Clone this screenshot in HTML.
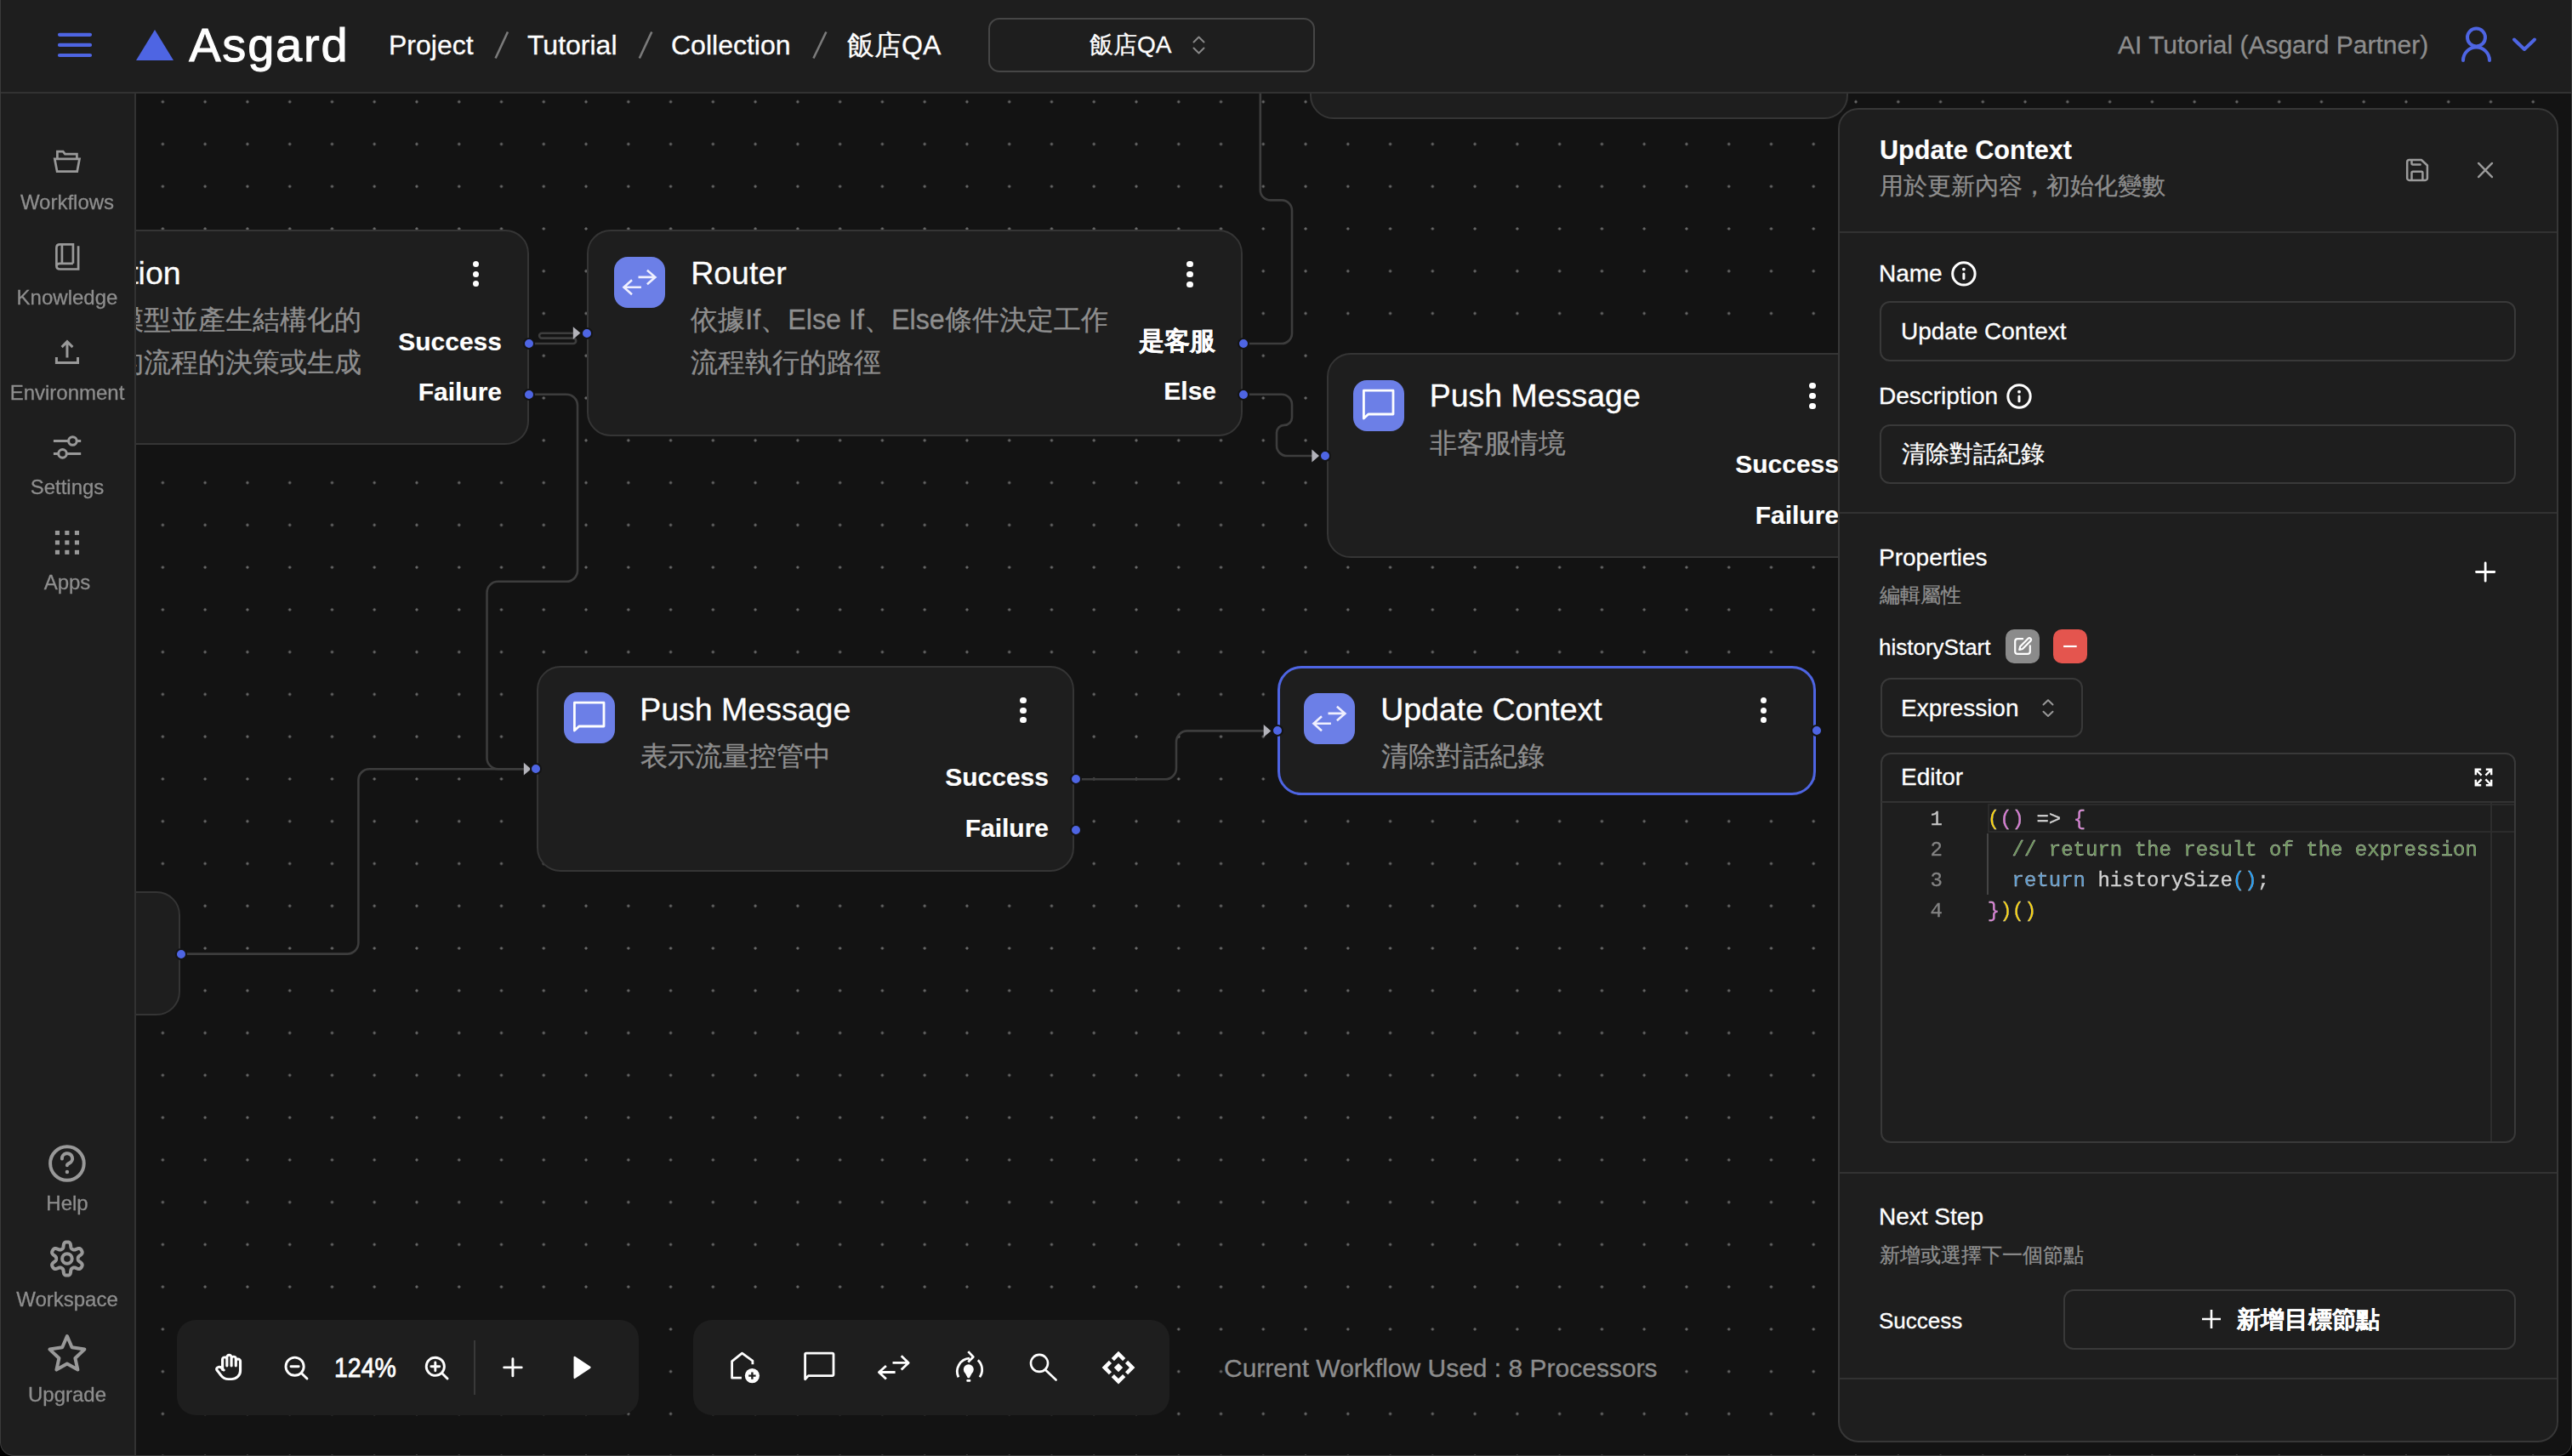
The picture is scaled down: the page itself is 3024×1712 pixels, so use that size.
<!DOCTYPE html><html><head><meta charset="utf-8"><style>
html,body{margin:0;padding:0;background:#000;}
body{width:3024px;height:1712px;overflow:hidden;position:relative;font-family:"Liberation Sans", sans-serif;-webkit-font-smoothing:antialiased;}
.t{position:absolute;white-space:nowrap;}
svg{position:absolute;left:0;top:0;overflow:visible;}
</style></head><body>
<div id="win" style="position:absolute;left:0;top:0;width:3024px;height:1712px;overflow:hidden;will-change:opacity;opacity:0.999;border-radius:0 0 16px 16px;background:#141414;">
<div style="position:absolute;left:0;top:0;width:3024px;height:1712px;background-image:radial-gradient(circle, #6a6a6a 1.3px, transparent 1.9px);background-size:49.77px 49.77px;background-position:17.21px -4.73px;"></div>

<svg width="3024" height="1712" style="z-index:1"><g fill="none" stroke="#3e3e3e" stroke-width="2.6">
<path d="M621.6,404 H674 A3.2,3.2 0 0 0 674,397.6 H637 A2.9,2.9 0 0 1 637,391.8 H676"/>
<path d="M621.6,463.7 H666 A13,13 0 0 1 679,476.7 V670.8 A13,13 0 0 1 666,683.8 H585.5 A13,13 0 0 0 572.5,696.8 V891.2 A13,13 0 0 0 585.5,904.2 H616"/>
<path d="M213,1121.6 H408.4 A13,13 0 0 0 421.4,1108.6 V917.2 A13,13 0 0 1 434.4,904.2 H616"/>
<path d="M1461.5,404 H1507 A12,12 0 0 0 1519,392 V247.4 A12,12 0 0 0 1507,235.4 H1493.8 A12,12 0 0 1 1481.8,223.4 V108"/>
<path d="M1461.5,463.7 H1507 A12,12 0 0 1 1519,475.7 V490.9 A9,9 0 0 1 1510,499.9 A9,9 0 0 0 1501,508.9 V524 A12,12 0 0 0 1513,536 H1545"/>
<path d="M1264.7,916.3 H1370 A13,13 0 0 0 1383,903.3 V872.4 A13,13 0 0 1 1396,859.4 H1488"/>
</g><g fill="#b4b4bb">
<path d="M682.4,391.6 L673.8,384.2 L673.8,399.0 Z"/>
<path d="M624.4,904.2 L615.8,896.8 L615.8,911.6 Z"/>
<path d="M1551.0,536.0 L1542.4,528.6 L1542.4,543.4 Z"/>
<path d="M1494.3,859.4 L1485.7,852.0 L1485.7,866.8 Z"/>
</g></svg>
<div style="position:absolute;left:60.0px;top:270.0px;width:561.5px;height:252.6px;box-sizing:border-box;background:#1f1f1f;border:2px solid #363636;border-radius:28px;z-index:2;"></div>
<div class="t" style="right:2811.4px;top:302.9px;font-size:37.5px;line-height:37.5px;color:#fff;font-weight:normal;-webkit-text-stroke:0.3px #fff;z-index:3;">Extraction</div>
<div class="t" style="right:2599.0px;top:360.0px;font-size:32.3px;line-height:32.3px;color:#8f8f8f;font-weight:normal;-webkit-text-stroke:0.3px #8f8f8f;z-index:3;">模型並產生結構化的</div>
<div class="t" style="right:2599.0px;top:410.0px;font-size:32.3px;line-height:32.3px;color:#8f8f8f;font-weight:normal;-webkit-text-stroke:0.3px #8f8f8f;z-index:3;">的流程的決策或生成</div>
<div style="position:absolute;left:555.7px;top:306.7px;width:7.2px;height:7.2px;border-radius:50%;background:#fff;z-index:3"></div>
<div style="position:absolute;left:555.7px;top:318.5px;width:7.2px;height:7.2px;border-radius:50%;background:#fff;z-index:3"></div>
<div style="position:absolute;left:555.7px;top:330.3px;width:7.2px;height:7.2px;border-radius:50%;background:#fff;z-index:3"></div>
<div class="t" style="right:2434.0px;top:386.8px;font-size:30px;line-height:30px;color:#fff;font-weight:bold;-webkit-text-stroke:0.15px #fff;z-index:3;">Success</div>
<div class="t" style="right:2434.0px;top:445.6px;font-size:30px;line-height:30px;color:#fff;font-weight:bold;-webkit-text-stroke:0.15px #fff;z-index:3;">Failure</div>
<div style="position:absolute;left:614.6px;top:397.0px;width:10px;height:10px;border-radius:50%;background:#4f66e4;border:2px solid #151515;z-index:4"></div>
<div style="position:absolute;left:614.6px;top:456.7px;width:10px;height:10px;border-radius:50%;background:#4f66e4;border:2px solid #151515;z-index:4"></div>
<div style="position:absolute;left:690.3px;top:270.2px;width:770.4px;height:242.6px;box-sizing:border-box;background:#1f1f1f;border:2px solid #363636;border-radius:28px;z-index:2;"></div>
<div style="position:absolute;left:722.0px;top:302.0px;width:60px;height:60px;border-radius:16px;background:#6d80e8;z-index:3"></div>
<svg width="60" height="60" style="left:722.0px;top:302.0px;z-index:3"><g fill="none" stroke="#f0f0ff" stroke-width="2.6"><path d="M750.5,325.9 H770.4 M760.9,317.7 L770.4,325.9 L760.9,334.2 M753.9,337.8 H733.5 M743,329.3 L733.5,337.8 L743,346.3" transform="translate(-722,-302)"/></g></svg>
<div class="t" style="left:812.2px;top:302.9px;font-size:37.5px;line-height:37.5px;color:#fff;font-weight:normal;-webkit-text-stroke:0.3px #fff;z-index:3;">Router</div>
<div class="t" style="left:812.3px;top:360.0px;font-size:32.3px;line-height:32.3px;color:#8f8f8f;font-weight:normal;-webkit-text-stroke:0.3px #8f8f8f;z-index:3;">依據If、Else If、Else條件決定工作</div>
<div class="t" style="left:812.3px;top:410.0px;font-size:32.3px;line-height:32.3px;color:#8f8f8f;font-weight:normal;-webkit-text-stroke:0.3px #8f8f8f;z-index:3;">流程執行的路徑</div>
<div style="position:absolute;left:1395.4px;top:307.0px;width:7.2px;height:7.2px;border-radius:50%;background:#fff;z-index:3"></div>
<div style="position:absolute;left:1395.4px;top:318.8px;width:7.2px;height:7.2px;border-radius:50%;background:#fff;z-index:3"></div>
<div style="position:absolute;left:1395.4px;top:330.6px;width:7.2px;height:7.2px;border-radius:50%;background:#fff;z-index:3"></div>
<div class="t" style="right:1595.0px;top:385.6px;font-size:30px;line-height:30px;color:#fff;font-weight:bold;-webkit-text-stroke:0.15px #fff;z-index:3;">是客服</div>
<div class="t" style="right:1594.0px;top:445.4px;font-size:30px;line-height:30px;color:#fff;font-weight:bold;-webkit-text-stroke:0.15px #fff;z-index:3;">Else</div>
<div style="position:absolute;left:683.0px;top:384.6px;width:10px;height:10px;border-radius:50%;background:#4f66e4;border:2px solid #151515;z-index:4"></div>
<div style="position:absolute;left:1454.5px;top:397.0px;width:10px;height:10px;border-radius:50%;background:#4f66e4;border:2px solid #151515;z-index:4"></div>
<div style="position:absolute;left:1454.5px;top:456.7px;width:10px;height:10px;border-radius:50%;background:#4f66e4;border:2px solid #151515;z-index:4"></div>
<div style="position:absolute;left:1539.6px;top:0.0px;width:633.4px;height:140.2px;box-sizing:border-box;background:#1f1f1f;border:2px solid #363636;border-radius:28px;z-index:2;"></div>
<div style="position:absolute;left:1559.5px;top:414.8px;width:632.5px;height:241.0px;box-sizing:border-box;background:#1f1f1f;border:2px solid #363636;border-radius:28px;z-index:2;"></div>
<div style="position:absolute;left:1590.8px;top:446.6px;width:60px;height:60px;border-radius:16px;background:#6d80e8;z-index:3"></div>
<svg width="60" height="60" style="left:1590.8px;top:446.6px;z-index:3"><g fill="none" stroke="#fff" stroke-width="2.8" stroke-linejoin="round"><path d="M1603.4,458.7 H1638 V486.5 H1608.8 L1603.4,491.6 Z" transform="translate(-1591,-446.5)"/></g></svg>
<div class="t" style="left:1680.7px;top:447.4px;font-size:37.5px;line-height:37.5px;color:#fff;font-weight:normal;-webkit-text-stroke:0.3px #fff;z-index:3;">Push Message</div>
<div class="t" style="left:1681.3px;top:504.5px;font-size:32.3px;line-height:32.3px;color:#8f8f8f;font-weight:normal;-webkit-text-stroke:0.3px #8f8f8f;z-index:3;">非客服情境</div>
<div style="position:absolute;left:2127.4px;top:450.2px;width:7.2px;height:7.2px;border-radius:50%;background:#fff;z-index:3"></div>
<div style="position:absolute;left:2127.4px;top:462.0px;width:7.2px;height:7.2px;border-radius:50%;background:#fff;z-index:3"></div>
<div style="position:absolute;left:2127.4px;top:473.8px;width:7.2px;height:7.2px;border-radius:50%;background:#fff;z-index:3"></div>
<div class="t" style="right:862.0px;top:530.6px;font-size:30px;line-height:30px;color:#fff;font-weight:bold;-webkit-text-stroke:0.15px #fff;z-index:3;">Success</div>
<div class="t" style="right:862.0px;top:591.3px;font-size:30px;line-height:30px;color:#fff;font-weight:bold;-webkit-text-stroke:0.15px #fff;z-index:3;">Failure</div>
<div style="position:absolute;left:1551.4px;top:529.0px;width:10px;height:10px;border-radius:50%;background:#4f66e4;border:2px solid #151515;z-index:4"></div>
<div style="position:absolute;left:630.7px;top:783.0px;width:632.6px;height:241.5px;box-sizing:border-box;background:#1f1f1f;border:2px solid #363636;border-radius:28px;z-index:2;"></div>
<div style="position:absolute;left:662.6px;top:814.4px;width:60px;height:60px;border-radius:16px;background:#6d80e8;z-index:3"></div>
<svg width="60" height="60" style="left:662.6px;top:814.4px;z-index:3"><g fill="none" stroke="#fff" stroke-width="2.8" stroke-linejoin="round"><path d="M1603.4,458.7 H1638 V486.5 H1608.8 L1603.4,491.6 Z" transform="translate(-1591,-446.5)"/></g></svg>
<div class="t" style="left:752.2px;top:815.9px;font-size:37.5px;line-height:37.5px;color:#fff;font-weight:normal;-webkit-text-stroke:0.3px #fff;z-index:3;">Push Message</div>
<div class="t" style="left:752.8px;top:873.0px;font-size:32.3px;line-height:32.3px;color:#8f8f8f;font-weight:normal;-webkit-text-stroke:0.3px #8f8f8f;z-index:3;">表示流量控管中</div>
<div style="position:absolute;left:1199.4px;top:819.7px;width:7.2px;height:7.2px;border-radius:50%;background:#fff;z-index:3"></div>
<div style="position:absolute;left:1199.4px;top:831.5px;width:7.2px;height:7.2px;border-radius:50%;background:#fff;z-index:3"></div>
<div style="position:absolute;left:1199.4px;top:843.3px;width:7.2px;height:7.2px;border-radius:50%;background:#fff;z-index:3"></div>
<div class="t" style="right:1791.0px;top:898.6px;font-size:30px;line-height:30px;color:#fff;font-weight:bold;-webkit-text-stroke:0.15px #fff;z-index:3;">Success</div>
<div class="t" style="right:1791.0px;top:958.9px;font-size:30px;line-height:30px;color:#fff;font-weight:bold;-webkit-text-stroke:0.15px #fff;z-index:3;">Failure</div>
<div style="position:absolute;left:622.8px;top:897.2px;width:10px;height:10px;border-radius:50%;background:#4f66e4;border:2px solid #151515;z-index:4"></div>
<div style="position:absolute;left:1257.7px;top:909.3px;width:10px;height:10px;border-radius:50%;background:#4f66e4;border:2px solid #151515;z-index:4"></div>
<div style="position:absolute;left:1257.7px;top:969.2px;width:10px;height:10px;border-radius:50%;background:#4f66e4;border:2px solid #151515;z-index:4"></div>
<div style="position:absolute;left:1502.2px;top:783.2px;width:633.1px;height:152.1px;box-sizing:border-box;background:#1f1f1f;border:3px solid #4f66e4;border-radius:28px;z-index:2;"></div>
<div style="position:absolute;left:1533.3px;top:814.6px;width:60px;height:60px;border-radius:16px;background:#6d80e8;z-index:3"></div>
<svg width="60" height="60" style="left:1533.3px;top:814.6px;z-index:3"><g fill="none" stroke="#f0f0ff" stroke-width="2.6"><path d="M750.5,325.9 H770.4 M760.9,317.7 L770.4,325.9 L760.9,334.2 M753.9,337.8 H733.5 M743,329.3 L733.5,337.8 L743,346.3" transform="translate(-722,-302)"/></g></svg>
<div class="t" style="left:1623.2px;top:815.9px;font-size:37.5px;line-height:37.5px;color:#fff;font-weight:normal;-webkit-text-stroke:0.3px #fff;z-index:3;">Update Context</div>
<div class="t" style="left:1623.8px;top:872.5px;font-size:32.3px;line-height:32.3px;color:#8f8f8f;font-weight:normal;-webkit-text-stroke:0.3px #8f8f8f;z-index:3;">清除對話紀錄</div>
<div style="position:absolute;left:2069.8px;top:819.7px;width:7.2px;height:7.2px;border-radius:50%;background:#fff;z-index:3"></div>
<div style="position:absolute;left:2069.8px;top:831.5px;width:7.2px;height:7.2px;border-radius:50%;background:#fff;z-index:3"></div>
<div style="position:absolute;left:2069.8px;top:843.3px;width:7.2px;height:7.2px;border-radius:50%;background:#fff;z-index:3"></div>
<div style="position:absolute;left:1494.5px;top:852.4px;width:10px;height:10px;border-radius:50%;background:#4f66e4;border:2px solid #151515;z-index:4"></div>
<div style="position:absolute;left:2129.0px;top:852.4px;width:10px;height:10px;border-radius:50%;background:#4f66e4;border:2px solid #151515;z-index:4"></div>
<div style="position:absolute;left:60.0px;top:1047.8px;width:151.7px;height:146.6px;box-sizing:border-box;background:#1f1f1f;border:2px solid #363636;border-radius:28px;z-index:2;"></div>
<div style="position:absolute;left:206.0px;top:1114.6px;width:10px;height:10px;border-radius:50%;background:#4f66e4;border:2px solid #151515;z-index:4"></div>
<div style="position:absolute;left:0.0px;top:0.0px;width:3024.0px;height:110.0px;box-sizing:border-box;background:#1f1f1f;border-bottom:2px solid #333;z-index:10;"></div>
<svg width="3024" height="110" style="z-index:11"><g stroke="#4f66e4" stroke-width="4.2" stroke-linecap="round"><path d="M70,40.8 H106 M70,52.9 H106 M70,65 H106"/></g><path d="M160,71 L182,35 L204,71 Z" fill="#4f66e4"/></svg>
<div style="position:absolute;z-index:11;left:0;top:0">
</div>
<div class="t" style="left:222.2px;top:25.2px;font-size:56px;line-height:56px;color:#fff;font-weight:normal;z-index:11;letter-spacing:1.8px;-webkit-text-stroke:1.0px #fff;">Asgard</div>
<div class="t" style="left:457.0px;top:37.1px;font-size:32px;line-height:32px;color:#fff;font-weight:normal;-webkit-text-stroke:0.3px #fff;z-index:11;">Project</div>
<div class="t" style="left:620.0px;top:37.1px;font-size:32px;line-height:32px;color:#fff;font-weight:normal;-webkit-text-stroke:0.3px #fff;z-index:11;">Tutorial</div>
<div class="t" style="left:789.0px;top:37.1px;font-size:32px;line-height:32px;color:#fff;font-weight:normal;-webkit-text-stroke:0.3px #fff;z-index:11;">Collection</div>
<div class="t" style="left:996.0px;top:37.1px;font-size:32px;line-height:32px;color:#fff;font-weight:normal;-webkit-text-stroke:0.3px #fff;z-index:11;">飯店QA</div>
<svg width="1100" height="110" style="z-index:11"><g stroke="#7c7c7c" stroke-width="2.6"><path d="M597,37.5 L582.6,68.5 M766.3,37.5 L751.8,68.5 M971.4,37.5 L956.4,68.5"/></g></svg>
<div style="position:absolute;left:1162.4px;top:20.8px;width:383.6px;height:64.4px;box-sizing:border-box;border:2px solid #474747;border-radius:13px;z-index:11;"></div>
<div class="t" style="left:1281.0px;top:38.9px;font-size:28px;line-height:28px;color:#fff;font-weight:normal;-webkit-text-stroke:0.3px #fff;z-index:11;">飯店QA</div>
<svg width="30" height="30" style="left:1395px;top:38px;z-index:11"><g fill="none" stroke="#888" stroke-width="2" stroke-linecap="round" stroke-linejoin="round"><path d="M8.5,11.5 L14.5,5.5 L20.5,11.5 M8.5,18.5 L14.5,24.5 L20.5,18.5"/></g></svg>
<div class="t" style="left:2490.0px;top:37.9px;font-size:30px;line-height:30px;color:#8e8e8e;font-weight:normal;-webkit-text-stroke:0.3px #8e8e8e;z-index:11;">AI Tutorial (Asgard Partner)</div>
<svg width="140" height="60" style="left:2880px;top:25px;z-index:11"><g fill="none" stroke="#4f66e4" stroke-width="4" stroke-linecap="round" stroke-linejoin="round"><circle cx="31.5" cy="19" r="10.5"/><path d="M16,46 A15.5,15.5 0 0 1 47,46"/><path d="M76,21.5 L88,33 L100,21.5"/></g></svg>
<div style="position:absolute;left:0.0px;top:110.0px;width:160.0px;height:1602.0px;box-sizing:border-box;background:#1f1f1f;border-right:2px solid #333;z-index:10;"></div>
<div class="t" style="left:-321.0px;width:800px;text-align:center;top:225.8px;font-size:24px;line-height:24px;color:#8f8f8f;font-weight:normal;-webkit-text-stroke:0.3px #8f8f8f;z-index:11;">Workflows</div>
<div class="t" style="left:-321.0px;width:800px;text-align:center;top:337.7px;font-size:24px;line-height:24px;color:#8f8f8f;font-weight:normal;-webkit-text-stroke:0.3px #8f8f8f;z-index:11;">Knowledge</div>
<div class="t" style="left:-321.0px;width:800px;text-align:center;top:449.7px;font-size:24px;line-height:24px;color:#8f8f8f;font-weight:normal;-webkit-text-stroke:0.3px #8f8f8f;z-index:11;">Environment</div>
<div class="t" style="left:-321.0px;width:800px;text-align:center;top:561.3px;font-size:24px;line-height:24px;color:#8f8f8f;font-weight:normal;-webkit-text-stroke:0.3px #8f8f8f;z-index:11;">Settings</div>
<div class="t" style="left:-321.0px;width:800px;text-align:center;top:673.2px;font-size:24px;line-height:24px;color:#8f8f8f;font-weight:normal;-webkit-text-stroke:0.3px #8f8f8f;z-index:11;">Apps</div>
<div class="t" style="left:-321.0px;width:800px;text-align:center;top:1403.4px;font-size:24px;line-height:24px;color:#8f8f8f;font-weight:normal;-webkit-text-stroke:0.3px #8f8f8f;z-index:11;">Help</div>
<div class="t" style="left:-321.0px;width:800px;text-align:center;top:1516.0px;font-size:24px;line-height:24px;color:#8f8f8f;font-weight:normal;-webkit-text-stroke:0.3px #8f8f8f;z-index:11;">Workspace</div>
<div class="t" style="left:-321.0px;width:800px;text-align:center;top:1627.7px;font-size:24px;line-height:24px;color:#8f8f8f;font-weight:normal;-webkit-text-stroke:0.3px #8f8f8f;z-index:11;">Upgrade</div>
<div style="position:absolute;left:208.0px;top:1552.0px;width:543.0px;height:111.5px;box-sizing:border-box;background:#1f1f1f;border-radius:22px;z-index:5;"></div>
<div style="position:absolute;left:815.0px;top:1551.6px;width:560.0px;height:112.4px;box-sizing:border-box;background:#1f1f1f;border-radius:22px;z-index:5;"></div>
<div class="t" style="left:392.5px;top:1591.9px;font-size:32px;line-height:32px;color:#fff;font-weight:normal;z-index:6;transform:scaleX(0.89);transform-origin:0 0;-webkit-text-stroke:0.8px #fff;">124%</div>
<div style="position:absolute;left:557.0px;top:1576.0px;width:2.0px;height:64.0px;box-sizing:border-box;background:#3a3a3a;z-index:6;"></div>
<div class="t" style="left:1439.0px;top:1594.1px;font-size:30px;line-height:30px;color:#8e8e8e;font-weight:normal;-webkit-text-stroke:0.3px #8e8e8e;z-index:6;">Current Workflow Used : 8 Processors</div>
<div style="position:absolute;left:2161.0px;top:126.5px;width:847.0px;height:1569.5px;box-sizing:border-box;background:#1f1f1f;border:2px solid #383838;border-radius:24px;z-index:20;"></div>
<div class="t" style="left:2210.0px;top:161.1px;font-size:30.6px;line-height:30.6px;color:#fff;font-weight:bold;-webkit-text-stroke:0.15px #fff;z-index:21;">Update Context</div>
<div class="t" style="left:2210.0px;top:205.3px;font-size:28px;line-height:28px;color:#8f8f8f;font-weight:normal;-webkit-text-stroke:0.3px #8f8f8f;z-index:21;">用於更新內容，初始化變數</div>
<div style="position:absolute;left:2163.0px;top:272.0px;width:843.0px;height:2.0px;box-sizing:border-box;background:#333;z-index:21;"></div>
<div style="position:absolute;left:2163.0px;top:602.0px;width:843.0px;height:2.0px;box-sizing:border-box;background:#333;z-index:21;"></div>
<div style="position:absolute;left:2163.0px;top:1378.0px;width:843.0px;height:2.0px;box-sizing:border-box;background:#333;z-index:21;"></div>
<div style="position:absolute;left:2163.0px;top:1620.0px;width:843.0px;height:2.0px;box-sizing:border-box;background:#333;z-index:21;"></div>
<div class="t" style="left:2209.0px;top:308.0px;font-size:28px;line-height:28px;color:#fff;font-weight:normal;-webkit-text-stroke:0.3px #fff;z-index:21;">Name</div>
<div class="t" style="left:2209.0px;top:452.3px;font-size:28px;line-height:28px;color:#fff;font-weight:normal;-webkit-text-stroke:0.3px #fff;z-index:21;">Description</div>
<div style="position:absolute;left:2210.0px;top:354.0px;width:748.0px;height:71.2px;box-sizing:border-box;border:2px solid #3a3a3a;border-radius:12px;z-index:21;"></div>
<div style="position:absolute;left:2210.0px;top:498.8px;width:748.0px;height:70.7px;box-sizing:border-box;border:2px solid #3a3a3a;border-radius:12px;z-index:21;"></div>
<div class="t" style="left:2235.0px;top:376.0px;font-size:28px;line-height:28px;color:#fff;font-weight:normal;-webkit-text-stroke:0.3px #fff;z-index:21;">Update Context</div>
<div class="t" style="left:2236.0px;top:519.8px;font-size:28px;line-height:28px;color:#fff;font-weight:normal;-webkit-text-stroke:0.3px #fff;z-index:21;">清除對話紀錄</div>
<div class="t" style="left:2209.0px;top:641.6px;font-size:28px;line-height:28px;color:#fff;font-weight:normal;-webkit-text-stroke:0.3px #fff;z-index:21;">Properties</div>
<div class="t" style="left:2210.0px;top:687.7px;font-size:24px;line-height:24px;color:#8f8f8f;font-weight:normal;-webkit-text-stroke:0.3px #8f8f8f;z-index:21;">編輯屬性</div>
<div class="t" style="left:2209.0px;top:748.0px;font-size:26px;line-height:26px;color:#fff;font-weight:normal;-webkit-text-stroke:0.3px #fff;z-index:21;">historyStart</div>
<div style="position:absolute;left:2358.0px;top:740.0px;width:40.0px;height:40.0px;box-sizing:border-box;background:#8c8c8c;border-radius:10px;z-index:21;"></div>
<div style="position:absolute;left:2414.0px;top:740.0px;width:40.0px;height:40.0px;box-sizing:border-box;background:#e5564f;border-radius:10px;z-index:21;"></div>
<div style="position:absolute;left:2210.5px;top:796.6px;width:238.8px;height:70.8px;box-sizing:border-box;border:2px solid #3a3a3a;border-radius:12px;z-index:21;"></div>
<div class="t" style="left:2235.0px;top:818.6px;font-size:28px;line-height:28px;color:#fff;font-weight:normal;-webkit-text-stroke:0.3px #fff;z-index:21;">Expression</div>
<div style="position:absolute;left:2210.5px;top:884.5px;width:747.0px;height:459.5px;box-sizing:border-box;border:2px solid #3a3a3a;border-radius:12px;z-index:21;"></div>
<div class="t" style="left:2235.0px;top:900.0px;font-size:28px;line-height:28px;color:#fff;font-weight:normal;-webkit-text-stroke:0.3px #fff;z-index:21;">Editor</div>
<div style="position:absolute;left:2212.0px;top:941.6px;width:744.0px;height:2.0px;box-sizing:border-box;background:#333;z-index:21;"></div>
<div class="t" style="left:2209.0px;top:1417.3px;font-size:28px;line-height:28px;color:#fff;font-weight:normal;-webkit-text-stroke:0.3px #fff;z-index:21;">Next Step</div>
<div class="t" style="left:2210.0px;top:1464.2px;font-size:24px;line-height:24px;color:#8f8f8f;font-weight:normal;-webkit-text-stroke:0.3px #8f8f8f;z-index:21;">新增或選擇下一個節點</div>
<div class="t" style="left:2209.0px;top:1539.7px;font-size:26px;line-height:26px;color:#fff;font-weight:normal;-webkit-text-stroke:0.3px #fff;z-index:21;">Success</div>
<div style="position:absolute;left:2426.4px;top:1516.2px;width:531.3px;height:70.8px;box-sizing:border-box;border:2px solid #3a3a3a;border-radius:12px;z-index:21;"></div>
<div class="t" style="left:2630.0px;top:1538.3px;font-size:28px;line-height:28px;color:#fff;font-weight:bold;-webkit-text-stroke:0.15px #fff;z-index:21;">新增目標節點</div>
<svg width="160" height="1712" style="z-index:11"><g fill="none" stroke="#9a9a9a" stroke-width="2.7" stroke-linejoin="miter">
<path d="M67.4,186.8 V178.2 H74.2 L76.4,181.1 H90.4 V186.8"/>
<path d="M64.3,186.8 H93.5 L90.7,201.6 H67.1 Z"/>
<path d="M85.9,309.8 V287.4 H70.5 Q66.4,287.4 66.4,291.5 V312.6 Q66.4,316.5 70.5,316.5 H92.1 V289.3 M72.9,287.4 V309.8 M85.9,309.8 H70.5 Q66.4,309.8 66.4,313"/>
</g>
<g fill="none" stroke="#9a9a9a" stroke-width="3">
<path d="M78.95,420.4 V402 M72.6,408.1 L78.95,401.7 L85.4,408.1"/>
<path d="M66.4,420 V426.5 H91.5 V420"/>
<path d="M62.9,518.5 H80.6 M90.2,518.5 H95.2 M62.9,533.4 H68.7 M78.3,533.4 H95.2"/>
<circle cx="85.4" cy="518.5" r="4.8"/><circle cx="73.5" cy="533.4" r="4.8"/>
</g>
<g fill="#9a9a9a">
<rect x="64.9" y="624" width="5.1" height="5.1"/><rect x="76.3" y="624" width="5.1" height="5.1"/><rect x="87.9" y="624" width="5.1" height="5.1"/>
<rect x="64.9" y="635.4" width="5.1" height="5.1"/><rect x="76.3" y="635.4" width="5.1" height="5.1"/><rect x="87.9" y="635.4" width="5.1" height="5.1"/>
<rect x="64.9" y="646.8" width="5.1" height="5.1"/><rect x="76.3" y="646.8" width="5.1" height="5.1"/><rect x="87.9" y="646.8" width="5.1" height="5.1"/>
<circle cx="78.9" cy="1378" r="2.2"/>
</g>
<g fill="none" stroke="#9a9a9a" stroke-width="4" stroke-linecap="round" stroke-linejoin="round">
<circle cx="78.9" cy="1368" r="19.8"/>
<path d="M72.9,1362.5 A6.1,6 0 1 1 81.6,1367.6 Q78.9,1369 78.9,1370.2"/>
<circle cx="78.9" cy="1480" r="5.8"/>
<path d="M91.70,1480.00 L91.70,1480.34 L91.72,1480.67 L91.75,1481.01 L91.81,1481.36 L91.92,1481.71 L92.12,1482.09 L92.45,1482.51 L92.97,1482.99 L93.69,1483.55 L94.55,1484.19 L95.38,1484.88 L96.03,1485.57 L96.45,1486.22 L96.66,1486.82 L96.70,1487.37 L96.64,1487.90 L96.51,1488.40 L96.33,1488.88 L96.12,1489.35 L95.87,1489.80 L95.60,1490.24 L95.31,1490.66 L94.98,1491.05 L94.61,1491.42 L94.19,1491.73 L93.68,1491.97 L93.06,1492.09 L92.29,1492.05 L91.37,1491.83 L90.36,1491.46 L89.37,1491.04 L88.53,1490.69 L87.85,1490.48 L87.32,1490.40 L86.89,1490.42 L86.53,1490.50 L86.20,1490.62 L85.89,1490.76 L85.59,1490.92 L85.30,1491.09 L85.01,1491.26 L84.73,1491.44 L84.45,1491.63 L84.18,1491.86 L83.93,1492.13 L83.70,1492.49 L83.50,1492.99 L83.35,1493.68 L83.22,1494.59 L83.09,1495.65 L82.91,1496.71 L82.65,1497.62 L82.29,1498.31 L81.88,1498.78 L81.42,1499.10 L80.93,1499.31 L80.43,1499.45 L79.92,1499.54 L79.41,1499.58 L78.90,1499.60 L78.39,1499.58 L77.88,1499.54 L77.37,1499.45 L76.87,1499.31 L76.38,1499.10 L75.92,1498.78 L75.51,1498.31 L75.15,1497.62 L74.89,1496.71 L74.71,1495.65 L74.58,1494.59 L74.45,1493.68 L74.30,1492.99 L74.10,1492.49 L73.87,1492.13 L73.62,1491.86 L73.35,1491.63 L73.07,1491.44 L72.79,1491.26 L72.50,1491.09 L72.21,1490.92 L71.91,1490.76 L71.60,1490.62 L71.27,1490.50 L70.91,1490.42 L70.48,1490.40 L69.95,1490.48 L69.27,1490.69 L68.43,1491.04 L67.44,1491.46 L66.43,1491.83 L65.51,1492.05 L64.74,1492.09 L64.12,1491.97 L63.61,1491.73 L63.19,1491.42 L62.82,1491.05 L62.49,1490.66 L62.20,1490.24 L61.93,1489.80 L61.68,1489.35 L61.47,1488.88 L61.29,1488.40 L61.16,1487.90 L61.10,1487.37 L61.14,1486.82 L61.35,1486.22 L61.77,1485.57 L62.42,1484.88 L63.25,1484.19 L64.11,1483.55 L64.83,1482.99 L65.35,1482.51 L65.68,1482.09 L65.88,1481.71 L65.99,1481.36 L66.05,1481.01 L66.08,1480.67 L66.10,1480.34 L66.10,1480.00 L66.10,1479.66 L66.08,1479.33 L66.05,1478.99 L65.99,1478.64 L65.88,1478.29 L65.68,1477.91 L65.35,1477.49 L64.83,1477.01 L64.11,1476.45 L63.25,1475.81 L62.42,1475.12 L61.77,1474.43 L61.35,1473.78 L61.14,1473.18 L61.10,1472.63 L61.16,1472.10 L61.29,1471.60 L61.47,1471.12 L61.68,1470.65 L61.93,1470.20 L62.20,1469.76 L62.49,1469.34 L62.82,1468.95 L63.19,1468.58 L63.61,1468.27 L64.12,1468.03 L64.74,1467.91 L65.51,1467.95 L66.43,1468.17 L67.44,1468.54 L68.43,1468.96 L69.27,1469.31 L69.95,1469.52 L70.48,1469.60 L70.91,1469.58 L71.27,1469.50 L71.60,1469.38 L71.91,1469.24 L72.21,1469.08 L72.50,1468.91 L72.79,1468.74 L73.07,1468.56 L73.35,1468.37 L73.62,1468.14 L73.87,1467.87 L74.10,1467.51 L74.30,1467.01 L74.45,1466.32 L74.58,1465.41 L74.71,1464.35 L74.89,1463.29 L75.15,1462.38 L75.51,1461.69 L75.92,1461.22 L76.38,1460.90 L76.87,1460.69 L77.37,1460.55 L77.88,1460.46 L78.39,1460.42 L78.90,1460.40 L79.41,1460.42 L79.92,1460.46 L80.43,1460.55 L80.93,1460.69 L81.42,1460.90 L81.88,1461.22 L82.29,1461.69 L82.65,1462.38 L82.91,1463.29 L83.09,1464.35 L83.22,1465.41 L83.35,1466.32 L83.50,1467.01 L83.70,1467.51 L83.93,1467.87 L84.18,1468.14 L84.45,1468.37 L84.73,1468.56 L85.01,1468.74 L85.30,1468.91 L85.59,1469.08 L85.89,1469.24 L86.20,1469.38 L86.53,1469.50 L86.89,1469.58 L87.32,1469.60 L87.85,1469.52 L88.53,1469.31 L89.37,1468.96 L90.36,1468.54 L91.37,1468.17 L92.29,1467.95 L93.06,1467.91 L93.68,1468.03 L94.19,1468.27 L94.61,1468.58 L94.98,1468.95 L95.31,1469.34 L95.60,1469.76 L95.87,1470.20 L96.12,1470.65 L96.33,1471.12 L96.51,1471.60 L96.64,1472.10 L96.70,1472.63 L96.66,1473.18 L96.45,1473.78 L96.03,1474.43 L95.38,1475.12 L94.55,1475.81 L93.69,1476.45 L92.97,1477.01 L92.45,1477.49 L92.12,1477.91 L91.92,1478.29 L91.81,1478.64 L91.75,1478.99 L91.72,1479.33 L91.70,1479.66 Z"/>
<path d="M78.9,1571 L84.6,1584.3 L99.4,1586.6 L88.4,1597 L91.4,1610.6 L78.9,1603.6 L66.4,1610.6 L69.4,1597 L58.4,1586.6 L73.2,1584.3 Z"/>
</g></svg>
<svg width="1400" height="1712" style="z-index:6"><g fill="none" stroke="#fff" stroke-width="2.9" stroke-linecap="round" stroke-linejoin="round">
<path transform="translate(255.5,0) scale(1.09,1) translate(-254,0)" d="M259.6,1610.5 V1598.3 A2.4,2.4 0 0 1 264.4,1598.3 V1606 M264.4,1598.3 V1595.7 A2.4,2.4 0 0 1 269.2,1595.7 V1606 M269.2,1597.5 A2.4,2.4 0 0 1 274,1597.5 V1606 M274,1600.4 A2.4,2.4 0 0 1 278.8,1600.4 V1612 A9.6,9.6 0 0 1 269.2,1621.6 H266 A9.6,9.6 0 0 1 258,1617.3 L253.5,1610.8 A2.3,2.3 0 0 1 254.6,1607.7 A2.9,2.9 0 0 1 258.2,1608.2 L261,1611"/>
<circle cx="346.6" cy="1606.7" r="10.6"/><path d="M342,1606.7 H351.2 M354.6,1614.7 L361,1621"/>
<circle cx="511.8" cy="1606.8" r="10.6"/><path d="M506.9,1606.8 H516.7 M511.8,1601.9 V1611.7 M519.8,1614.8 L526,1621"/>
<path d="M592.7,1607.9 H613.2 M602.9,1597.7 V1617.9"/>
</g>
<path d="M674.5,1596 Q674.5,1594 676.3,1595 L694,1606.8 Q695.6,1607.9 694,1609 L676.3,1620.8 Q674.5,1621.9 674.5,1619.8 Z" fill="#fff"/>
<g fill="none" stroke="#fff" stroke-width="2.8" stroke-linejoin="round" stroke-linecap="butt">
<path d="M871.9,1620.2 H860.6 V1600.6 L872.5,1591.2 L884.9,1600.1 V1604.2"/>
<path d="M947.9,1591.2 H978.4 A1.6,1.6 0 0 1 980,1592.8 V1616 A1.6,1.6 0 0 1 978.4,1617.6 H950.4 L946.6,1621.8 V1592.5 A1.3,1.3 0 0 1 947.9,1591.2 Z"/>
<path d="M1049.5,1602.4 H1068.2 M1059.7,1594.3 L1068.2,1602.4 L1059.7,1610.4 M1052.6,1613.5 H1033.4 M1041.9,1606 L1033.4,1613.5 L1041.9,1621.6"/>
<path d="M1126.9,1619.3 A15.5,15.5 0 0 1 1140,1597.2 M1138.3,1589.1 L1144.3,1595.5 L1138.3,1601.6 M1149.8,1599.2 A15.5,15.5 0 0 1 1151.9,1619.3"/>
</g>
<g fill="none" stroke="#fff" stroke-width="2.6" stroke-linecap="round"><circle cx="1222" cy="1602.9" r="10"/><path d="M1229.7,1611.2 L1241.6,1622.5"/></g>
<g fill="#fff">
<circle cx="884.4" cy="1617.6" r="8.6"/>
<path d="M1138.8,1604.2 A6,6 0 0 1 1144.8,1610.2 Q1144.8,1612.6 1142.6,1615 L1139.8,1620.2 H1137.8 L1135,1615 Q1132.8,1612.6 1132.8,1610.2 A6,6 0 0 1 1138.8,1604.2 Z"/>
<rect x="1136.3" y="1622" width="5" height="2.8" rx="1"/>
<path d="M1315.00,1588.70 L1323.25,1596.95 L1320.05,1600.15 L1315.00,1595.10 L1309.95,1600.15 L1306.75,1596.95 Z M1334.40,1608.10 L1326.15,1616.35 L1322.95,1613.15 L1328.00,1608.10 L1322.95,1603.05 L1326.15,1599.85 Z M1315.00,1627.50 L1306.75,1619.25 L1309.95,1616.05 L1315.00,1621.10 L1320.05,1616.05 L1323.25,1619.25 Z M1295.60,1608.10 L1303.85,1599.85 L1307.05,1603.05 L1302.00,1608.10 L1307.05,1613.15 L1303.85,1616.35 Z M1315.00,1602.90 L1320.20,1608.10 L1315.00,1613.30 L1309.80,1608.10 Z"/>
</g>
<path d="M880.2,1617.6 H888.6 M884.4,1613.4 V1621.8" stroke="#1f1f1f" stroke-width="2.4"/>
</svg>
<svg width="3024" height="1712" style="z-index:22"><g fill="none" stroke="#9c9c9c" stroke-width="2.5" stroke-linejoin="round" stroke-linecap="round">
<path d="M2832.7,188 H2846.9 L2853.9,194.5 V209.4 A2.5,2.5 0 0 1 2851.4,211.9 H2832.7 A2.5,2.5 0 0 1 2830.2,209.4 V190.5 A2.5,2.5 0 0 1 2832.7,188 Z"/>
<path d="M2835.5,188.5 V192 A1.5,1.5 0 0 0 2837,193.5 H2845.6 M2835.5,211.5 V203.3 A1.5,1.5 0 0 1 2837,201.8 H2846.9 A1.5,1.5 0 0 1 2848.4,203.3 V211.5"/>
<path d="M2914.1,191.9 L2930,208.1 M2930,191.9 L2914.1,208.1" stroke-width="2.4"/>
</g>
<g fill="none" stroke="#fff" stroke-width="3" stroke-linecap="round">
<circle cx="2308.9" cy="321.9" r="13.2"/><path d="M2308.9,322 V327.6"/>
<circle cx="2374" cy="466" r="13.2"/><path d="M2374,466.1 V471.7"/>
<path d="M2911.5,672.5 H2932.8 M2922.15,661.9 V683.2" stroke-width="2.8"/>
</g>
<g fill="#fff"><circle cx="2308.9" cy="316.6" r="1.9"/><circle cx="2374" cy="460.7" r="1.9"/></g>
<g fill="none" stroke="#fff" stroke-width="2.2" stroke-linecap="round" stroke-linejoin="round">
<path d="M2378.2,751.2 H2372.2 A3,3 0 0 0 2369.2,754.2 V765.9 A3,3 0 0 0 2372.2,768.9 H2383.8 A3,3 0 0 0 2386.8,765.9 V759.3"/>
<path d="M2374.3,764 L2375.2,760.2 L2384.6,750.8 A1.9,1.9 0 0 1 2387.4,753.6 L2378,763 Z"/>
<path d="M2426.1,760 H2441.7" stroke-width="2.2" stroke-linecap="butt"/>
</g>
<g fill="none" stroke="#9a9a9a" stroke-width="2" stroke-linecap="round" stroke-linejoin="round"><path d="M2402.5,828.5 L2408,823.2 L2413.5,828.5 M2402.5,836.8 L2408,842 L2413.5,836.8"/></g>
<g fill="none" stroke="#fff" stroke-width="2.4" stroke-linecap="butt" stroke-linejoin="miter">
<path d="M2910.8,911.2 V904.8 H2917.2 M2911.3,905.3 L2917.6,911.6 M2929.2,911.2 V904.8 H2922.8 M2928.7,905.3 L2922.4,911.6 M2910.8,916.8 V923.2 H2917.2 M2911.3,922.7 L2917.6,916.4 M2929.2,916.8 V923.2 H2922.8 M2928.7,922.7 L2922.4,916.4"/>
<path d="M2589,1551 H2611 M2600,1540 V1562" stroke-width="2.6"/>
</g>
</svg>
<div style="position:absolute;left:2336.5px;top:944.5px;width:619.5px;height:34.0px;box-sizing:border-box;border:2px solid #2c2c2c;border-right:none;z-index:21;"></div>
<div style="position:absolute;left:2336.0px;top:980.0px;width:2.0px;height:71.6px;box-sizing:border-box;background:#454545;z-index:21;"></div>
<div style="position:absolute;left:2927.6px;top:943.6px;width:2.0px;height:398.4px;box-sizing:border-box;background:#2e2e2e;z-index:21;"></div>
<div class="t" style="right:740.0px;top:952.1px;font-size:24px;line-height:24px;color:#c6c6c6;font-weight:normal;font-family:'Liberation Mono', monospace;-webkit-text-stroke:0.3px #c6c6c6;z-index:22;">1</div>
<div class="t" style="right:740.0px;top:987.8px;font-size:24px;line-height:24px;color:#858585;font-weight:normal;font-family:'Liberation Mono', monospace;-webkit-text-stroke:0.3px #858585;z-index:22;">2</div>
<div class="t" style="right:740.0px;top:1023.7px;font-size:24px;line-height:24px;color:#858585;font-weight:normal;font-family:'Liberation Mono', monospace;-webkit-text-stroke:0.3px #858585;z-index:22;">3</div>
<div class="t" style="right:740.0px;top:1059.5px;font-size:24px;line-height:24px;color:#858585;font-weight:normal;font-family:'Liberation Mono', monospace;-webkit-text-stroke:0.3px #858585;z-index:22;">4</div>
<div class="t" style="left:2336.8px;top:952.1px;font-size:24px;line-height:24px;color:#d4d4d4;font-weight:normal;font-family:'Liberation Mono', monospace;-webkit-text-stroke:0.3px #d4d4d4;z-index:22;white-space:pre;"><span style="color:#ffd700">(</span><span style="color:#da70d6">()</span><span style="color:#d4d4d4"> =&gt; </span><span style="color:#da70d6">{</span></div>
<div class="t" style="left:2336.8px;top:987.8px;font-size:24px;line-height:24px;color:#d4d4d4;font-weight:normal;font-family:'Liberation Mono', monospace;-webkit-text-stroke:0.3px #d4d4d4;z-index:22;white-space:pre;"><span style="color:#6a9955">  // return the result of the expression</span></div>
<div class="t" style="left:2336.8px;top:1023.7px;font-size:24px;line-height:24px;color:#d4d4d4;font-weight:normal;font-family:'Liberation Mono', monospace;-webkit-text-stroke:0.3px #d4d4d4;z-index:22;white-space:pre;"><span style="color:#569cd6">  return</span><span style="color:#d4d4d4"> historySize</span><span style="color:#179fff">()</span><span style="color:#d4d4d4">;</span></div>
<div class="t" style="left:2336.8px;top:1059.5px;font-size:24px;line-height:24px;color:#d4d4d4;font-weight:normal;font-family:'Liberation Mono', monospace;-webkit-text-stroke:0.3px #d4d4d4;z-index:22;white-space:pre;"><span style="color:#da70d6">}</span><span style="color:#ffd700">)</span><span style="color:#ffd700">()</span></div>
<div style="position:absolute;left:0.0px;top:0.0px;width:3024.0px;height:1712.0px;box-sizing:border-box;border:1px solid #3c3c3c;border-top:none;border-radius:0 0 16px 16px;z-index:100;pointer-events:none;"></div>
</div></body></html>
